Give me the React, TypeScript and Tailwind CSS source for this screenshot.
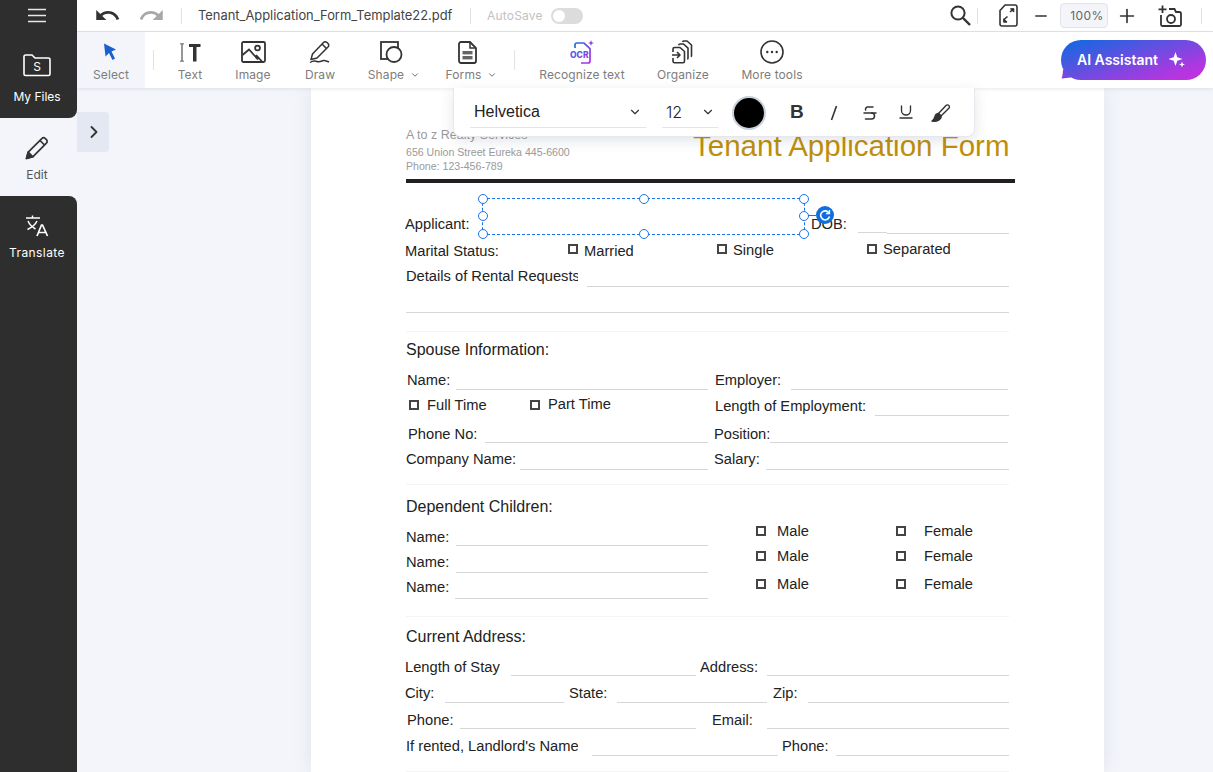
import clsx from "clsx";
import { ReactNode } from "react";
import { ChevronDown, ChevronRight, Minus, Plus, Strikethrough, Underline } from "lucide-react";
import { MdRedo, MdUndo } from "react-icons/md";

interface TextProps {
  className?: string;
  children: ReactNode;
}

const Label = ({ className, children }: TextProps) => (
  <span className={clsx("block shrink-0 overflow-hidden whitespace-nowrap text-[14.7px] leading-4 text-[#222]", className)}>
    {children}
  </span>
);

const Rule = ({ className }: { className?: string }) => <span className={clsx("block h-px shrink-0 bg-[#d6d6d6]", className)} />;

const Box = ({ className }: { className?: string }) => (
  <span className={clsx("block size-[10px] shrink-0 border-2 border-[#444]", className)} />
);

const Heading = ({ className, children }: TextProps) => (
  <div className={clsx("h-5 pt-px text-[16px] leading-5 text-[#222]", className)}>{children}</div>
);

const Faint = ({ className }: { className?: string }) => <div className={clsx("h-px w-[603px] bg-[#f4f4f4]", className)} />;

const Handle = ({ className }: { className: string }) => (
  <span className={clsx("absolute size-[10px] rounded-full border border-[#1a73e8] bg-white", className)} />
);

const Tool = ({ label, className, children, chevron, muted }: { label: string; className: string; children: ReactNode; chevron?: boolean; muted?: boolean }) => (
  <div className={clsx("flex shrink-0 flex-col items-center", className, muted && "bg-[#f3f5fa]")}>
    <div className="mt-[5px] flex h-[30px] items-center">{children}</div>
    <div className="flex items-center gap-[6px] text-[12px] leading-[16px] tracking-[0.1px] text-[#7d7d7d]">
      {label}
      {chevron && <ChevronDown size={10} className="text-[#555]" />}
    </div>
  </div>
);

const FolderIcon = () => (
  <svg width="30" height="24" viewBox="0 0 30 24" fill="none" className="text-white">
    <path d="M2 3.5C2 2.7 2.6 2 3.5 2H10L13 5H26.5C27.3 5 28 5.7 28 6.5V21C28 21.8 27.3 22.5 26.5 22.5H3.5C2.6 22.5 2 21.8 2 21V3.5Z" stroke="currentColor" strokeWidth="1.6" />
    <text x="15" y="18" textAnchor="middle" fontSize="12" fontFamily="Inter, sans-serif" fill="currentColor">S</text>
  </svg>
);

const PencilIcon = () => (
  <svg width="24" height="24" viewBox="0 0 24 24" fill="none" stroke="#333" strokeWidth="1.7" strokeLinejoin="round">
    <path d="M1.5 22.5L3.2 16.2L16.8 2.6C17.8 1.6 19.4 1.6 20.4 2.6L21.4 3.6C22.4 4.6 22.4 6.2 21.4 7.2L7.8 20.8L1.5 22.5Z" />
    <path d="M15 4.5L19.5 9" />
    <path d="M1.5 22.5L3.2 16.2L7.8 20.8Z" fill="#333" />
  </svg>
);

const TranslateIcon = () => (
  <svg width="24" height="22" viewBox="0 0 24 22" fill="none" stroke="white" strokeWidth="1.5">
    <path d="M1 3H15" />
    <path d="M7.5 0.5V3" />
    <path d="M3 6C4.5 9.5 8 12.5 10.5 14M12 6C10.5 9.5 6.5 12.5 2.5 14.5" />
    <path d="M12 21L16.5 10H17.5L22.5 21M13.5 17.5H21" strokeWidth="1.7" />
  </svg>
);

const TextIcon = () => (
  <svg width="22" height="19" viewBox="0 0 22 19" fill="#333">
    <path d="M1 0.5H5V1.3H3.5V17.7H5V18.5H1V17.7H2.5V1.3H1Z" />
    <path d="M10 1H21.5V4H17.5V18.5H14V4H10Z" />
  </svg>
);

const ImageIcon = () => (
  <svg width="25" height="22" viewBox="0 0 25 22" fill="none" stroke="#333" strokeWidth="1.8">
    <rect x="1" y="1" width="23" height="20" rx="1.5" />
    <circle cx="16.5" cy="7" r="2.4" />
    <path d="M1.5 14L8 8.5L17 18.5M15 14L21 20.5" />
  </svg>
);

const DrawIcon = () => (
  <svg width="22" height="24" viewBox="0 0 22 24" fill="none" stroke="#333" strokeWidth="1.5" strokeLinejoin="round">
    <path d="M2 19.5L3.5 14L14.5 2.5C15.5 1.5 17 1.5 18 2.5L19 3.5C20 4.5 20 6 19 7L8 18L2 19.5Z" />
    <path d="M13 4L17.5 8.5" />
    <path d="M1 22.5C4 20.5 6 20.5 8 21.5C10 22.5 13 21 14.5 20.5C16 20 18 21 20 22" />
  </svg>
);

const ShapeIcon = () => (
  <svg width="23" height="22" viewBox="0 0 23 22" fill="white" stroke="#333" strokeWidth="1.8">
    <rect x="1" y="1" width="17" height="17" />
    <circle cx="14" cy="13.5" r="7.5" />
  </svg>
);

const FormsIcon = () => (
  <svg width="19" height="23" viewBox="0 0 19 23" fill="none">
    <path d="M1 3C1 1.9 1.9 1 3 1H12L18 7V20C18 21.1 17.1 22 16 22H3C1.9 22 1 21.1 1 20V3Z" stroke="#333" strokeWidth="1.8" />
    <path d="M12 1V7H18" stroke="#333" strokeWidth="1.5" />
    <rect x="4.5" y="10" width="10" height="3.4" fill="#666" />
    <rect x="4.5" y="15" width="10" height="3.4" fill="#666" />
  </svg>
);

const OcrIcon = () => (
  <svg width="24" height="24" viewBox="0 0 24 24" fill="none">
    <defs>
      <linearGradient id="ocr-grad" x1="0" y1="0" x2="1" y2="1">
        <stop offset="0" stopColor="#1f6fe5" />
        <stop offset="1" stopColor="#b32fe0" />
      </linearGradient>
    </defs>
    <path d="M5 8V5C5 4 5.6 3 7 3H14L20 8.5V21C20 22 19.4 23 18 23H11" stroke="url(#ocr-grad)" strokeWidth="1.7" />
    <text x="0" y="17.5" fontSize="8.5" fontWeight="800" fontFamily="Inter, sans-serif" fill="url(#ocr-grad)">OCR</text>
    <path d="M21 0L21.8 2.2L24 3L21.8 3.8L21 6L20.2 3.8L18 3L20.2 2.2Z" fill="#9b38e0" />
  </svg>
);

const OrganizeIcon = () => (
  <svg width="22" height="24" viewBox="0 0 22 24" fill="none" stroke="#333" strokeWidth="1.6" strokeLinejoin="round">
    <path d="M1 12V9C1 8 1.6 7.5 2.5 7.5H8L12.5 11.5V21C12.5 22 12 22.7 11 22.7H2.5C1.6 22.7 1 22 1 21V18" />
    <path d="M0 15H7.5M5 12L8 15L5 18" strokeWidth="1.6" />
    <path d="M6.5 5.2C6.8 4.5 7.3 4 8 4H11.5L16 8.2V18C16 18.5 15.8 19 15.4 19.4" />
    <path d="M10.5 2C10.8 1.4 11.3 1 12 1H15L19.5 5V15.5C19.5 16 19.3 16.4 19 16.8" />
  </svg>
);

const MoreIcon = () => (
  <svg width="24" height="24" viewBox="0 0 24 24" fill="none">
    <circle cx="12" cy="12" r="11" stroke="#333" strokeWidth="1.6" />
    <circle cx="7.3" cy="12" r="1.2" fill="#333" />
    <circle cx="12" cy="12" r="1.2" fill="#333" />
    <circle cx="16.7" cy="12" r="1.2" fill="#333" />
  </svg>
);

const SearchIcon = () => (
  <svg width="21" height="21" viewBox="0 0 21 21" fill="none" stroke="#333">
    <circle cx="8" cy="8" r="6.6" strokeWidth="2" />
    <path d="M13 13L20 20" strokeWidth="2.4" />
  </svg>
);

const ExpandIcon = () => (
  <svg width="19" height="23" viewBox="0 0 19 23" fill="none" stroke="#333" strokeWidth="1.6" strokeLinejoin="round">
    <path d="M1 6.5L6 1H16C17.1 1 18 1.9 18 3V20C18 21.1 17.1 22 16 22H3C1.9 22 1 21.1 1 20V6.5Z" />
    <path d="M11 8L14.5 5M5 15.5L8.5 12.5" />
    <path d="M11 4.5H15V8.5M4.5 14V18H8.5" fill="#333" stroke="none" />
    <path d="M11.5 5H14.5V8M5 15V18H8" />
  </svg>
);

const CameraIcon = () => (
  <svg width="24" height="22" viewBox="0 0 24 22" fill="none" stroke="#333" strokeWidth="1.8">
    <path d="M3 10V19.5C3 20.3 3.7 21 4.5 21H21.5C22.3 21 23 20.3 23 19.5V8.5C23 7.7 22.3 7 21.5 7H18L16.5 4H11" />
    <circle cx="13" cy="14" r="4" />
    <path d="M4.5 0.5V8M0.5 4.3H8.5" />
  </svg>
);

const BrushIcon = () => (
  <svg width="20" height="20" viewBox="0 0 20 20" fill="none" stroke="#333" strokeWidth="1.4" strokeLinejoin="round">
    <path d="M7.5 10.5L15 2.5C15.8 1.7 17 1.7 17.8 2.5C18.6 3.3 18.6 4.5 17.8 5.3L10 13Z" />
    <path d="M7.5 10.5C5.5 10.5 4.5 11.5 4 13.5C3.5 15.5 2.5 17 1 18C4 18.5 8 18 9.5 15.5C10.2 14.5 10.3 13.6 10 13Z" fill="#333" />
  </svg>
);

const App = () => {
  return (
    <div className="flex h-[772px] w-[1213px] overflow-hidden bg-[#f3f5fa] font-[Inter,sans-serif]">
      <aside className="flex w-[77px] shrink-0 flex-col bg-[#f3f5fa]">
        <div className="flex h-[118px] flex-col items-center rounded-br-lg bg-[#2e2e2e] pr-[3px]">
          <svg width="18" height="16" viewBox="0 0 18 16" className="mt-[8px]" fill="none" stroke="#e8e8e8" strokeWidth="1.6">
            <path d="M0 1.5H18M0 7.5H18M0 13.5H18" />
          </svg>
          <div className="mt-[29px]">
            <FolderIcon />
          </div>
          <span className="mt-[12px] text-[12px] leading-4 text-white">My Files</span>
        </div>
        <div className="flex h-[78px] flex-col items-center pr-[3px]">
          <div className="mt-[18px]">
            <PencilIcon />
          </div>
          <span className="mt-[7px] text-[12px] leading-4 text-[#555]">Edit</span>
        </div>
        <div className="flex flex-1 flex-col items-center rounded-tr-lg bg-[#2e2e2e] pr-[3px]">
          <div className="mt-[19px]">
            <TranslateIcon />
          </div>
          <span className="mt-[8px] text-[12px] leading-4 tracking-[0.4px] text-white">Translate</span>
        </div>
      </aside>

      <main className="relative flex min-w-0 flex-1 flex-col">
        <header className="flex h-[32px] shrink-0 items-center border-b border-[#e4e4e4] bg-white">
          <MdUndo size={27} className="ml-[17px] text-[#333]" />
          <MdRedo size={27} className="ml-[17px] text-[#a8a8a8]" />
          <span className="ml-[16px] h-4 w-px bg-[#e2e2e2]" />
          <span className="ml-[16px] w-[272px] text-[12.9px] leading-4 text-[#444]">Tenant_Application_Form_Template22.pdf</span>
          <span className="h-4 w-px bg-[#e2e2e2]" />
          <span className="ml-[16px] w-[64px] text-[12px] leading-4 tracking-[0.2px] text-[#c2c2c2]">AutoSave</span>
          <span className="flex h-4 w-8 items-center rounded-full bg-[#dcdcdc] pl-[2px]">
            <span className="size-3 rounded-full bg-white" />
          </span>
          <span className="ml-[367px]">
            <SearchIcon />
          </span>
          <span className="ml-[6px] h-4 w-px bg-[#e2e2e2]" />
          <span className="ml-[21px]">
            <ExpandIcon />
          </span>
          <Minus size={18} strokeWidth={1.8} className="ml-[14px] text-[#333]" />
          <span className="ml-[10px] flex h-[25px] w-[48px] items-center justify-center rounded border border-[#e2e4ea] bg-[#f3f5fa] pl-[6px] text-[12px] tracking-[0.4px] text-[#666]">
            100%
          </span>
          <Plus size={22} strokeWidth={1.8} className="ml-[8px] text-[#333]" />
          <span className="ml-[20px]">
            <CameraIcon />
          </span>
          <span className="ml-[19px] h-4 w-px bg-[#e2e2e2]" />
        </header>

        <div className="relative z-10 flex h-[56px] shrink-0 items-stretch bg-white shadow-[0_1px_4px_rgba(60,70,100,0.12)]">
          <Tool label="Select" className="w-[68px]" muted>
            <svg width="14" height="18" viewBox="0 0 14 18" fill="#1a5fd0" className="-ml-[2px]">
              <path d="M1 0.5L13 6.5L8.5 8.5L12 15.5L9.5 17L6 10L2.5 13.5Z" />
            </svg>
          </Tool>
          <span className="ml-[8px] mt-[18px] h-5 w-px bg-[#e2e2e2]" />
          <Tool label="Text" className="w-[72px]">
            <TextIcon />
          </Tool>
          <Tool label="Image" className="w-[54px]">
            <ImageIcon />
          </Tool>
          <Tool label="Draw" className="w-[80px]">
            <DrawIcon />
          </Tool>
          <Tool label="Shape" className="ml-[7px] w-[54px]" chevron>
            <div className="mr-[6px]">
              <ShapeIcon />
            </div>
          </Tool>
          <Tool label="Forms" className="ml-[25px] w-[51px]" chevron>
            <div className="mr-[9px]">
              <FormsIcon />
            </div>
          </Tool>
          <span className="ml-[17px] mt-[18px] h-5 w-px bg-[#e2e2e2]" />
          <Tool label="Recognize text" className="w-[134px]">
            <OcrIcon />
          </Tool>
          <Tool label="Organize" className="w-[68px]">
            <OrganizeIcon />
          </Tool>
          <Tool label="More tools" className="w-[110px]">
            <MoreIcon />
          </Tool>
          <div className="relative ml-[234px] mt-[8px] flex h-[40px] w-[145px] items-center rounded-[20px] bg-[linear-gradient(162deg,#0b6be0,#b934e0_85%)] pb-px pl-[16px] text-[14px] font-semibold text-white">
            <svg width="10" height="10" viewBox="0 0 10 10" className="absolute bottom-[1px] left-0" fill="#7a45e0">
              <path d="M2 0L10 8.5L0.5 9.5C1.5 7 2 3 2 0Z" />
            </svg>
            <span className="relative">AI Assistant</span>
            <svg width="17" height="18" viewBox="0 0 17 18" fill="white" className="relative ml-[11px]">
              <path d="M6.5 1L8.3 6.2L13.5 8L8.3 9.8L6.5 15L4.7 9.8L-0.5 8L4.7 6.2Z" />
              <path d="M13 10.5L13.8 12.7L16 13.5L13.8 14.3L13 16.5L12.2 14.3L10 13.5L12.2 12.7Z" />
            </svg>
          </div>
        </div>

        <div className="flex min-h-0 flex-1">
          <div className="w-[234px] shrink-0">
            <button className="mt-[24px] flex h-10 w-8 items-center justify-center rounded-r bg-[#e4e8f3] pl-[2px] text-[#333]">
              <ChevronRight size={20} strokeWidth={2.2} />
            </button>
          </div>

          <div className="relative h-[684px] w-[793px] shrink-0 bg-white pl-[95px] font-['Liberation_Sans',Arial,sans-serif] shadow-[0_0_18px_rgba(70,80,110,0.1)]">
            <div className="flex h-[91px]">
              <div className="w-[287px] pt-[39px] text-[#9a9a9a]">
                <div className="text-[12.5px] leading-4">A to z Realty Services</div>
                <div className="mt-[2px] text-[10.6px] leading-[14px]">656 Union Street Eureka 445-6600</div>
                <div className="text-[10.6px] leading-[14px]">Phone: 123-456-789</div>
              </div>
              <div className="mt-[40px] whitespace-nowrap text-[29.5px] leading-9 text-[#bf8f0b]">Tenant Application Form</div>
            </div>
            <div className="h-1 w-[609px] bg-[#231f20]" />

            <div className="flex h-[51px] items-end">
              <Label className="-ml-px mb-[2px] w-[406px]">Applicant:</Label>
              <Label className="mb-[2px] w-[47px]">DOB:</Label>
              <Rule className="mb-px w-[29px]" />
              <Rule className="w-[122px]" />
            </div>
            <div className="flex h-[26px] items-end">
              <Label className="-ml-px mb-px w-[163px]">Marital Status:</Label>
              <Box className="mb-[6px]" />
              <Label className="mb-px ml-[6px] w-[133px]">Married</Label>
              <Box className="mb-[6px]" />
              <Label className="mb-[2px] ml-[6px] w-[134px]">Single</Label>
              <Box className="mb-[6px]" />
              <Label className="mb-[3px] ml-[6px]">Separated</Label>
            </div>
            <div className="flex h-[27px] items-end">
              <Label className="mb-[3px] w-[172px]">Details of Rental Requests</Label>
              <Rule className="ml-[9px] w-[422px]" />
            </div>
            <div className="flex h-[26px] items-end">
              <Rule className="w-[603px]" />
            </div>
            <Faint className="mt-[18px]" />

            <Heading className="mt-[7px]">Spouse Information:</Heading>
            <div className="flex h-[31px] items-end">
              <Label className="mb-[2px] ml-px w-[49px]">Name:</Label>
              <Rule className="w-[252px]" />
              <Label className="mb-[2px] ml-[7px] w-[76px]">Employer:</Label>
              <Rule className="w-[217px]" />
            </div>
            <div className="flex h-[26px] items-end">
              <Box className="mb-[6px] ml-[3px]" />
              <Label className="mb-[3px] ml-[8px] w-[103px]">Full Time</Label>
              <Box className="mb-[6px]" />
              <Label className="mb-[4px] ml-[8px] w-[167px]">Part Time</Label>
              <Label className="mb-[2px] w-[160px]">Length of Employment:</Label>
              <Rule className="w-[134px]" />
            </div>
            <div className="flex h-[27px] items-end">
              <Label className="mb-px ml-[2px] w-[77px]">Phone No:</Label>
              <Rule className="w-[223px]" />
              <Label className="mb-px ml-[6px] w-[56px]">Position:</Label>
              <Rule className="w-[238px]" />
            </div>
            <div className="flex h-[27px] items-end">
              <Label className="mb-[3px] w-[114px]">Company Name:</Label>
              <Rule className="w-[188px]" />
              <Label className="mb-[3px] ml-[6px] w-[52px]">Salary:</Label>
              <Rule className="w-[243px]" />
            </div>
            <Faint className="mt-[14px]" />

            <Heading className="mt-[11px]">Dependent Children:</Heading>
            <div className="flex h-[30px] items-end">
              <Label className="mb-px w-[50px]">Name:</Label>
              <Rule className="w-[252px]" />
              <Box className="mb-[10px] ml-[48px]" />
              <Label className="mb-[7px] ml-[11px] w-[119px]">Male</Label>
              <Box className="mb-[10px]" />
              <Label className="mb-[7px] ml-[18px]">Female</Label>
            </div>
            <div className="flex h-[27px] items-end">
              <Label className="mb-[3px] w-[50px]">Name:</Label>
              <Rule className="w-[252px]" />
              <Box className="mb-[12px] ml-[48px]" />
              <Label className="mb-[9px] ml-[11px] w-[119px]">Male</Label>
              <Box className="mb-[12px]" />
              <Label className="mb-[9px] ml-[18px]">Female</Label>
            </div>
            <div className="flex h-[26px] items-end">
              <Label className="mb-[4px] w-[49px]">Name:</Label>
              <Rule className="w-[253px]" />
              <Box className="mb-[10px] ml-[48px]" />
              <Label className="mb-[7px] ml-[11px] w-[119px]">Male</Label>
              <Box className="mb-[10px]" />
              <Label className="mb-[7px] ml-[18px]">Female</Label>
            </div>
            <Faint className="mt-[17px]" />

            <Heading className="mt-[9px]">Current Address:</Heading>
            <div className="flex h-[30px] items-end">
              <Label className="-ml-px mb-px w-[106px]">Length of Stay</Label>
              <Rule className="w-[185px]" />
              <Label className="mb-px ml-[4px] w-[67px]">Address:</Label>
              <Rule className="w-[242px]" />
            </div>
            <div className="flex h-[27px] items-end">
              <Label className="-ml-px mb-[2px] w-[40px]">City:</Label>
              <Rule className="w-[119px]" />
              <Label className="mb-[2px] ml-[5px] w-[48px]">State:</Label>
              <Rule className="w-[150px]" />
              <Label className="mb-[2px] ml-[6px] w-[35px]">Zip:</Label>
              <Rule className="w-[201px]" />
            </div>
            <div className="flex h-[26px] items-end">
              <Label className="mb-px ml-px w-[53px]">Phone:</Label>
              <Rule className="w-[236px]" />
              <Label className="mb-px ml-[16px] w-[55px]">Email:</Label>
              <Rule className="w-[242px]" />
            </div>
            <div className="flex h-[27px] items-end">
              <Label className="mb-[2px] w-[172px]">If rented, Landlord's Name</Label>
              <Rule className="ml-[14px] w-[186px]" />
              <Label className="mb-[2px] ml-[4px] w-[54px]">Phone:</Label>
              <Rule className="w-[173px]" />
            </div>
            <Faint className="mt-[15px]" />

            {/* selected text box on the page */}
            <div className="absolute left-[171px] top-[110px] h-[37px] w-[323px] border border-dashed border-[#1a73e8]">
              <Handle className="-left-[5px] -top-[5px]" />
              <Handle className="left-[156px] -top-[5px]" />
              <Handle className="-right-[5px] -top-[5px]" />
              <Handle className="-left-[5px] top-[12px]" />
              <Handle className="-right-[5px] top-[12px]" />
              <Handle className="-bottom-[5px] -left-[5px]" />
              <Handle className="-bottom-[5px] left-[156px]" />
              <Handle className="-bottom-[5px] -right-[5px]" />
              <span className="absolute -right-[12px] top-[16px] h-px w-[8px] bg-[#1a73e8]" />
              <span className="absolute -right-[30px] top-[7px] flex size-[18px] items-center justify-center rounded-full bg-[#0f6fde]">
                <svg width="12" height="12" viewBox="0 0 12 12" fill="none" stroke="white" strokeWidth="1.6">
                  <path d="M10 4A4.5 4.5 0 1 0 10.5 7.5" />
                  <path d="M10.5 1V4.5H7" strokeWidth="1.3" />
                </svg>
              </span>
            </div>
          </div>
        </div>

        {/* floating text format bar */}
        <div className="absolute left-[376px] top-[88px] z-20 flex h-[49px] w-[522px] items-start rounded-b-lg border-x border-b border-[#e6e8ee] bg-white shadow-[0_4px_14px_rgba(60,70,100,0.14)]">
          <div className="ml-[16px] mt-[8px] flex h-[32px] w-[176px] items-center justify-between border-b border-[#e2e4ea] pl-[4px] pr-[4px]">
            <span className="font-['Liberation_Sans',Arial,sans-serif] text-[16px] text-[#222]">Helvetica</span>
            <ChevronDown size={14} strokeWidth={2} className="text-[#333]" />
          </div>
          <div className="ml-[16px] mt-[8px] flex h-[32px] w-[56px] items-center justify-between border-b border-[#e2e4ea] pl-[4px] pr-[3px]">
            <span className="text-[16px] font-light text-[#222]">12</span>
            <ChevronDown size={14} strokeWidth={2} className="text-[#333]" />
          </div>
          <span className="ml-[14px] mt-[8px] size-[34px] rounded-full border-2 border-[#c9d1da] bg-black" />
          <span className="ml-[24px] mt-[12px] font-['Liberation_Sans',Arial,sans-serif] text-[19px] font-bold leading-6 text-[#333]">B</span>
          <svg width="8" height="16" viewBox="0 0 8 16" fill="none" stroke="#333" strokeWidth="1.6" className="ml-[26px] mt-[17px]">
            <path d="M6.5 1L1.5 15" />
          </svg>
          <Strikethrough size={18} strokeWidth={2} className="ml-[23px] mt-[16px] text-[#333]" />
          <Underline size={18} strokeWidth={1.8} className="ml-[18px] mt-[15px] text-[#333]" />
          <span className="ml-[16px] mt-[15px]">
            <BrushIcon />
          </span>
        </div>
      </main>
    </div>
  );
};

export default App;
